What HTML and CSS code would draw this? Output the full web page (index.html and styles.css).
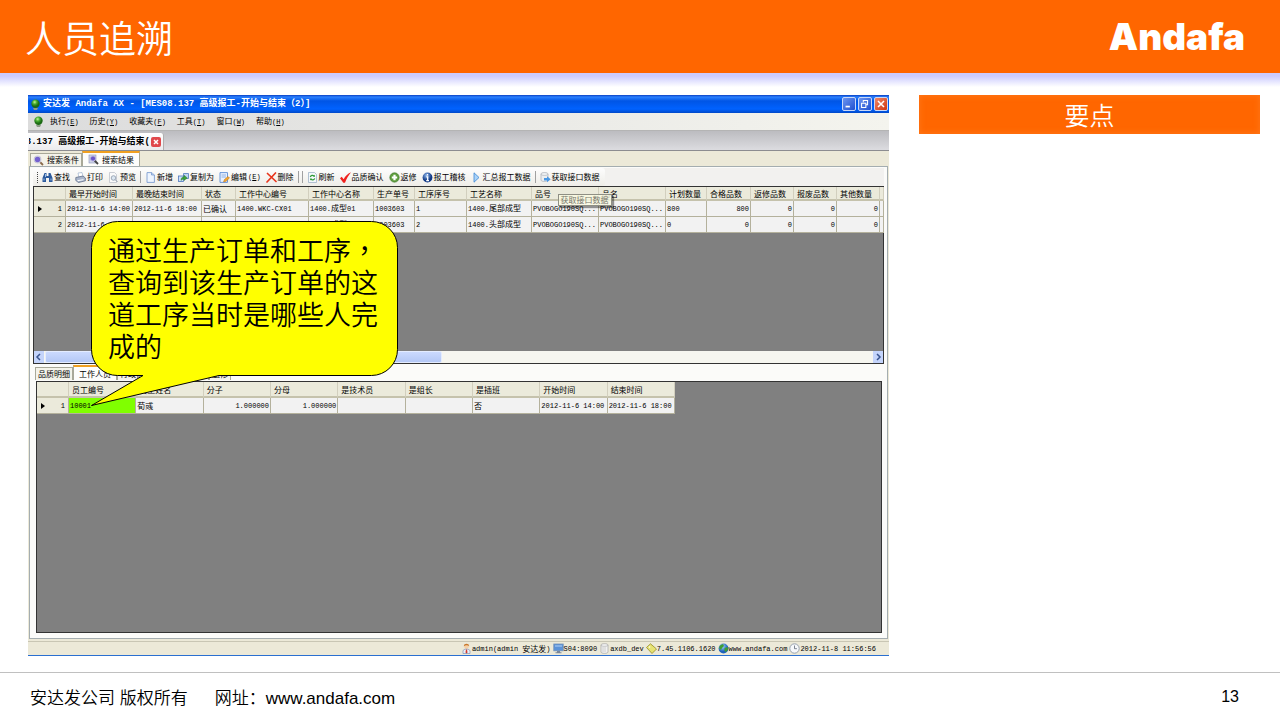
FILE: index.html
```html
<!DOCTYPE html>
<html lang="zh-CN">
<head>
<title>人员追溯</title>
<meta charset="utf-8">
<link rel="stylesheet" href="styles.css">
</head>
<body>

<svg class="sprite" aria-hidden="true">
  <defs>
    <radialGradient id="gGreen" cx="40%" cy="30%"><stop offset="0" stop-color="#c8f59a"/><stop offset=".5" stop-color="#46ac2e"/><stop offset="1" stop-color="#1c6a14"/></radialGradient>
    <radialGradient id="gBlue" cx="40%" cy="30%"><stop offset="0" stop-color="#8fb8ee"/><stop offset="1" stop-color="#123a86"/></radialGradient>
    <radialGradient id="gGlobe" cx="40%" cy="30%"><stop offset="0" stop-color="#a5d4fa"/><stop offset="1" stop-color="#1f62bc"/></radialGradient>
  </defs>
  <symbol id="leaf" viewBox="0 0 11 11"><circle cx="5.5" cy="4.8" r="4.2" fill="url(#gGreen)"/><path d="M3 9h5l-1 2H4z" fill="#8d9a88"/></symbol>
  <symbol id="search" viewBox="0 0 11 11"><path d="M6.5 6.5L10 10" stroke="#8a6a4a" stroke-width="1.8"/><circle cx="4.5" cy="4.5" r="3.3" fill="#7460d0" stroke="#c9c9da" stroke-width="1.2"/></symbol>
  <symbol id="searchdoc" viewBox="0 0 11 11"><rect x="1" y="1" width="7" height="8" fill="#cfd4e8" stroke="#8c93b8" stroke-width=".6"/><path d="M6.5 6.5L10 10" stroke="#444" stroke-width="1.8"/><circle cx="5" cy="4.5" r="2.6" fill="#6a55c8" stroke="#b8b4e0"/></symbol>
  <symbol id="find" viewBox="0 0 11 11"><path d="M2.5 1h2v3h2V1h2l2 5v4H7V6H4v4H.5V6z" fill="#2c5a9c"/><path d="M2 6.5v2M9 6.5v2M3.5 2v3" stroke="#a9c8ef" stroke-width=".9"/></symbol>
  <symbol id="print" viewBox="0 0 11 11"><path d="M3 1l4-.5 1 4-4 1z" fill="#fff" stroke="#8fa6c8" stroke-width=".6"/><path d="M.8 5.5L8 4l2.400 2v2.800L3.500 10.500.8 8.500z" fill="#aab6cc" stroke="#54617c" stroke-width=".7"/><path d="M2.500 8.700l6-1" stroke="#fff"/></symbol>
  <symbol id="preview" viewBox="0 0 11 11"><path d="M1.500.5h5l2 2v8h-7z" fill="#fafafa" stroke="#b8bcc6" stroke-width=".7"/><circle cx="5.500" cy="6" r="2.300" fill="#dce7f2" stroke="#8c98a8" stroke-width=".8"/><path d="M7.200 7.700l2.300 2.300" stroke="#8c98a8"/></symbol>
  <symbol id="new" viewBox="0 0 11 11"><path d="M2 .6h4.600L9.400 3v7.400H2z" fill="#eef5ff" stroke="#6f92cc" stroke-width=".8"/><path d="M6.500.6V3h2.900" fill="#bcd2f2" stroke="#6f92cc" stroke-width=".7"/></symbol>
  <symbol id="copy" viewBox="0 0 11 11"><rect x=".5" y="4" width="5" height="5.500" fill="#cfe0fa" stroke="#4f78bd" stroke-width=".8"/><path d="M5.500 1.500h5v5h-5z" fill="#bfd4f5" stroke="#4f78bd" stroke-width=".8"/><path d="M3 8.500C3 6 4 5 6 5V3.200L9.300 6 6 8.600V7C4.800 7 4 7.500 3 8.500z" fill="#3da23a" stroke="#1d6e22" stroke-width=".4"/></symbol>
  <symbol id="edit" viewBox="0 0 11 11"><path d="M1 .6h7.500v9.800H1z" fill="#e8f1ff" stroke="#5b8cd6" stroke-width=".9"/><path d="M2.500 3h4.500M2.500 5h4.500" stroke="#7ea4dc" stroke-width=".8"/><path d="M4.500 10l1-2.500L9 4.500l1.500 1.500L7 9.300z" fill="#f4a72c" stroke="#b86a10" stroke-width=".5"/></symbol>
  <symbol id="delete" viewBox="0 0 11 11"><path d="M1.500 1.500l8.500 8M9.500 1L1 10" stroke="#e8361c" stroke-width="1.700" stroke-linecap="round"/></symbol>
  <symbol id="refresh" viewBox="0 0 11 11"><path d="M1.500.5h6l2 2v8h-8z" fill="#f4f8fb" stroke="#93a9c2" stroke-width=".7"/><path d="M3.300 5c.4-1.800 2.700-2.200 3.700-.8M7.700 6.300c-.4 1.800-2.700 2.200-3.700.8" fill="none" stroke="#2e9a36" stroke-width="1.200"/><path d="M6 4.800h2V2.700zM5 6.600H3v2z" fill="#2e9a36"/></symbol>
  <symbol id="check" viewBox="0 0 11 11"><path d="M0 6.200l1.700-1.400 2 2.400C5.200 4.300 7.500 1.500 11 .2 8.500 3.300 6.300 7 5 10.800H3.300z" fill="#f0201c"/></symbol>
  <symbol id="plus" viewBox="0 0 11 11"><circle cx="5.500" cy="5.500" r="4.700" fill="#5f9e3e" stroke="#3c7428" stroke-width=".6"/><path d="M5.500 2.800v5.400M2.800 5.500h5.400" stroke="#fff" stroke-width="2.200"/></symbol>
  <symbol id="info" viewBox="0 0 11 11"><circle cx="5.500" cy="5.500" r="4.900" fill="url(#gBlue)"/><path d="M5.500 2v1.500M4.300 4.800h1.400v3.700M4.200 8.700h2.800" stroke="#fff" stroke-width="1.300" fill="none"/></symbol>
  <symbol id="play" viewBox="0 0 11 11"><path d="M3 .8l5 4.700-5 4.700z" fill="#a9d2f8" stroke="#3b86d4" stroke-width=".8"/></symbol>
  <symbol id="fetch" viewBox="0 0 11 11"><path d="M1 2c0-2 7-2 7 0v6c0 2-7 2-7 0z" fill="#eceef0" stroke="#a9aeb5" stroke-width=".7"/><path d="M1 2.200c0 1.700 7 1.700 7 0" fill="none" stroke="#a9aeb5" stroke-width=".6"/><path d="M4 6h3V4.300L10.700 7.300 7 10.300V8.600H4z" fill="#4a98e4"/></symbol>
  <symbol id="user" viewBox="0 0 11 11"><circle cx="5.500" cy="3.500" r="2.300" fill="#f5cfa5"/><path d="M2.800 3.200C3 0 8 0 8.200 3.200 7 2 4.500 2 2.800 3.200z" fill="#c8782c"/><path d="M2 10.500V8c0-2.500 7-2.500 7 0v2.500z" fill="#e8eef8" stroke="#7e93b8" stroke-width=".7"/><path d="M5 6.500h1l.5 3-1 1-1-1z" fill="#d23a2c"/></symbol>
  <symbol id="monitor" viewBox="0 0 11 11"><rect x=".8" y="1" width="9.400" height="6.800" fill="#5c93d8" stroke="#6f8fb8" stroke-width=".8"/><path d="M2 3h7" stroke="#b2d2f5"/><path d="M4 8h3v1.200h1.500v1.100h-6V9.200H4z" fill="#7a8698"/></symbol>
  <symbol id="db" viewBox="0 0 11 11"><path d="M2 2c0-1.800 7-1.800 7 0v7c0 1.800-7 1.800-7 0z" fill="#f1f1f1" stroke="#a4a4a4" stroke-width=".7"/><path d="M4 4v5M6 4v5" stroke="#c7c7c7" stroke-width=".8"/><path d="M2 2.200c0 1.500 7 1.500 7 0" fill="none" stroke="#a4a4a4" stroke-width=".6"/></symbol>
  <symbol id="tag" viewBox="0 0 11 11"><path d="M.5 4.500L4.500.8 10.500 6 6 10.500z" fill="#e6e272" stroke="#948c24" stroke-width=".8"/><circle cx="3.500" cy="4" r=".8" fill="#fff"/></symbol>
  <symbol id="globe" viewBox="0 0 11 11"><circle cx="5.500" cy="5.500" r="4.900" fill="url(#gGlobe)"/><path d="M2 2.500l3-1.500 1 2-2 2-1 2-2-2zM6.500 5l3-1 .5 2.500-2 2.500-1.500-1z" fill="#3f9e34"/></symbol>
  <symbol id="clock" viewBox="0 0 11 11"><circle cx="5.500" cy="5.500" r="4.700" fill="#f6f8fb" stroke="#97a0ae"/><path d="M5.500 2.500v3.200h2.400" fill="none" stroke="#5d6675" stroke-width=".8"/></symbol>
</svg>

<header class="slide-header">
  <h1>人员追溯</h1>
  <span class="brand">Andafa</span>
</header>

<main class="slide-body">
  <section class="window">
    <div class="titlebar">
      <svg class="icon"><use href="#leaf"/></svg>
      <h2>安达发 Andafa AX - [MES08.137 高级报工-开始与结束（2）]</h2>
      <button class="winbtn" aria-label="最小化"><svg viewBox="0 0 14 14"><path d="M3 10h5" stroke="#fff" stroke-width="2"/></svg></button>
      <button class="winbtn" aria-label="还原"><svg viewBox="0 0 14 14"><path d="M5 5V3h5v5H8M3 6h5v5H3z" fill="none" stroke="#fff" stroke-width="1.200"/></svg></button>
      <button class="winbtn close" aria-label="关闭"><svg viewBox="0 0 14 14"><path d="M3.500 3.500l7 7M10.500 3.500l-7 7" stroke="#fff" stroke-width="1.800"/></svg></button>
    </div>

    <nav class="menubar">
      <svg class="icon"><use href="#leaf"/></svg>
      <button>执行<span class="mono">(<u>E</u>)</span></button>
      <button>历史<span class="mono">(<u>Y</u>)</span></button>
      <button>收藏夹<span class="mono">(<u>F</u>)</span></button>
      <button>工具<span class="mono">(<u>T</u>)</span></button>
      <button>窗口<span class="mono">(<u>W</u>)</span></button>
      <button>帮助<span class="mono">(<u>H</u>)</span></button>
    </nav>

    <div class="doctabs">
      <div class="doctab">
        <span class="doctab-name">08.137 高级报工-开始与结束(</span>
        <button class="doctab-close" aria-label="关闭"><svg viewBox="0 0 10 10"><path d="M3 3l4 4M7 3L3 7" stroke="#fff" stroke-width="1.500"/></svg></button>
      </div>
    </div>

    <div class="viewtabs">
      <button class="tab"><svg class="icon"><use href="#search"/></svg>搜索条件</button>
      <button class="tab active"><svg class="icon"><use href="#searchdoc"/></svg>搜索结果</button>
    </div>

    <div class="page">
      <div class="toolbar-row">
        <div class="toolbar">
          <span class="grip"></span>
          <button><svg class="icon"><use href="#find"/></svg>查找</button>
          <button><svg class="icon"><use href="#print"/></svg>打印</button>
          <button><svg class="icon"><use href="#preview"/></svg>预览</button>
          <span class="sep"></span>
          <button><svg class="icon"><use href="#new"/></svg>新增</button>
          <button><svg class="icon"><use href="#copy"/></svg>复制为</button>
          <button><svg class="icon"><use href="#edit"/></svg>编辑<span class="mono">(<u>E</u>)</span></button>
          <button><svg class="icon"><use href="#delete"/></svg>删除</button>
          <span class="sep"></span>
          <span class="sep"></span>
          <button><svg class="icon"><use href="#refresh"/></svg>刷新</button>
          <button><svg class="icon"><use href="#check"/></svg>品质确认</button>
          <button><svg class="icon"><use href="#plus"/></svg>返修</button>
          <button><svg class="icon"><use href="#info"/></svg>报工稽核</button>
          <button><svg class="icon"><use href="#play"/></svg>汇总报工数据</button>
          <span class="sep"></span>
          <button class="has-tip"><svg class="icon"><use href="#fetch"/></svg>获取接口数据<span class="tip">获取接口数据</span></button>
        </div>
      </div>

      <div class="grid-pane top">
        <table class="grid wide">
          <colgroup>
            <col class="w32"><col class="w67"><col class="w69"><col class="w34"><col class="w73"><col class="w65"><col class="w41"><col class="w52"><col class="w65"><col class="w67"><col class="w67"><col class="w41"><col class="w44"><col class="w43"><col class="w43"><col class="w43"><col class="w4">
          </colgroup>
          <thead>
            <tr><th></th><th>最早开始时间</th><th>最晚结束时间</th><th>状态</th><th>工作中心编号</th><th>工作中心名称</th><th>生产单号</th><th>工序序号</th><th>工艺名称</th><th>品号</th><th>品名</th><th>计划数量</th><th>合格品数</th><th>返修品数</th><th>报废品数</th><th>其他数量</th><th></th></tr>
          </thead>
          <tbody>
            <tr>
              <td class="rowhead current">1</td>
              <td>2012-11-6 14:00</td><td>2012-11-6 18:00</td><td class="cjk">已确认</td><td>1400.WKC-CX01</td><td>1400.<b>成型</b>01</td><td>1003603</td><td>1</td><td>1400.<b>尾部成型</b></td><td>PVOBOGO190SQ...</td><td>PVOBOGO190SQ...</td><td>800</td><td class="num">800</td><td class="num">0</td><td class="num">0</td><td class="num">0</td><td></td>
            </tr>
            <tr>
              <td class="rowhead">2</td>
              <td>2012-11-6 14:00</td><td>2012-11-6 18:00</td><td class="cjk">已确认</td><td>1400.WKC-CX01</td><td>1400.<b>成型</b>01</td><td>1003603</td><td>2</td><td>1400.<b>头部成型</b></td><td>PVOBOGO190SQ...</td><td>PVOBOGO190SQ...</td><td>0</td><td class="num">0</td><td class="num">0</td><td class="num">0</td><td class="num">0</td><td></td>
            </tr>
          </tbody>
        </table>
        <div class="scrollbar">
          <button class="scroll-btn" aria-label="向左"><svg viewBox="0 0 8 8"><path d="M5 1L2 4l3 3" fill="none" stroke="#3a558f" stroke-width="1.500"/></svg></button>
          <div class="scroll-track"><div class="scroll-thumb"></div></div>
          <button class="scroll-btn" aria-label="向右"><svg viewBox="0 0 8 8"><path d="M3 1l3 3-3 3" fill="none" stroke="#3a558f" stroke-width="1.500"/></svg></button>
        </div>
      </div>

      <div class="viewtabs detail">
        <button class="tab">品质明细</button>
        <button class="tab active">工作人员</button>
        <button class="tab">行政信息</button>
        <button class="tab">工装模具记录</button>
        <button class="tab">返修</button>
      </div>

      <div class="grid-pane bottom">
        <table class="grid staff">
          <thead>
            <tr><th class="w32"></th><th>员工编号</th><th>员工姓名</th><th>分子</th><th>分母</th><th>是技术员</th><th>是组长</th><th>是插班</th><th>开始时间</th><th>结束时间</th></tr>
          </thead>
          <tbody>
            <tr>
              <td class="rowhead current">1</td><td class="picked">10001</td><td class="cjk">荀彧</td><td class="num">1.000000</td><td class="num">1.000000</td><td></td><td></td><td class="cjk">否</td><td>2012-11-6 14:00</td><td>2012-11-6 18:00</td>
            </tr>
          </tbody>
        </table>
      </div>
    </div>

    <div class="statusbar">
      <span><svg class="icon"><use href="#user"/></svg>admin(admin <b>安达发</b>)</span>
      <span><svg class="icon"><use href="#monitor"/></svg>S04:8090</span>
      <span><svg class="icon"><use href="#db"/></svg>axdb_dev</span>
      <span><svg class="icon"><use href="#tag"/></svg>7.45.1106.1620</span>
      <span><svg class="icon"><use href="#globe"/></svg>www.andafa.com</span>
      <span><svg class="icon"><use href="#clock"/></svg>2012-11-8 11:56:56</span>
    </div>

    <div class="callout">
      <svg viewBox="0 0 308 186" aria-hidden="true"><path d="M26.500.500h254a26 26 0 0 1 26 26v102a26 26 0 0 1-26 26H128L.500 184.500 52 154.500H26.500a26 26 0 0 1-26-26v-102a26 26 0 0 1 26-26z" fill="#ff0" stroke="#000"/></svg>
      <p>通过生产订单和工序<span class="comma" lang="zh-TW">，</span>查询到该生产订单的这道工序当时是哪些人完成的</p>
    </div>
  </section>

  <aside class="keypoints">
    <h2>要点</h2>
  </aside>
</main>

<footer class="slide-footer">
  <span>安达发公司 版权所有</span>
  <span class="site">网址：<a href="http://www.andafa.com">www.andafa.com</a></span>
  <span class="page-no">13</span>
</footer>

</body>
</html>
```

FILE: styles.css
```css
* {
    box-sizing: border-box;
}

body {
    margin: 0;
    min-height: 100vh;
    display: flex;
    flex-direction: column;
    background-color: #fff;
    color: #000;
    font-family: "Liberation Sans", "Noto Sans CJK SC", sans-serif;
}

h1, h2, p {
    margin: 0;
    font-weight: normal;
}

button {
    margin: 0;
    padding: 0;
    border: 0;
    background: none;
    color: inherit;
    font: inherit;
}

.sprite {
    position: absolute;
    width: 0;
    height: 0;
}

.icon {
    flex: none;
    width: 11px;
    height: 11px;
}

.mono {
    font-family: "Liberation Mono", monospace;
    font-size: 7px;
}

/* slide frame */

.slide-header {
    display: flex;
    justify-content: space-between;
    align-items: center;
    height: 73px;
    padding: 0 35px 0 25px;
    background-color: #ff6600;
    color: #fff;
}

.slide-header h1 {
    font-family: "Noto Sans CJK SC", sans-serif;
    font-size: 37px;
    font-weight: 350;
}

.brand {
    font-family: Inter, sans-serif;
    font-size: 37px;
    font-weight: 900;
}

.slide-body {
    flex: 1;
    display: grid;
    grid-template-columns: 861fr 341fr;
    gap: 30px;
    padding: 22px 20px 16px 28px;
    background: linear-gradient(#ccccff 3px, #fff 14px);
}

.keypoints h2 {
    background-color: #ff6600;
    box-shadow: inset 0 0 6px #ff7a1c;
    color: #fff;
    font-family: "Noto Sans CJK SC", sans-serif;
    font-size: 25px;
    font-weight: 350;
    line-height: 38px;
    padding-bottom: 1px;
    text-align: center;
}

.slide-footer {
    display: flex;
    align-items: center;
    height: 48px;
    padding: 0 41px 0 30px;
    border-top: 1px solid #c0c0c0;
    font-size: 17px;
    font-weight: 350;
}

.slide-footer .site {
    margin-left: 27px;
}

.slide-footer a {
    color: #000;
    text-decoration: none;
}

.slide-footer .page-no {
    margin-left: auto;
    font-size: 16px;
}

/* application window */

.window {
    position: relative;
    display: flex;
    flex-direction: column;
    min-width: 0;
    background-color: #ece9d8;
    border-bottom: 1px solid #2a6fd0;
    font-family: "Noto Sans CJK SC", sans-serif;
    font-size: 8px;
    line-height: 12px;
    white-space: nowrap;
}

.titlebar {
    display: flex;
    align-items: center;
    gap: 2px;
    height: 18px;
    padding: 0 1px 0 2px;
    background: linear-gradient(#0a3fc0, #2a80ff 2px, #0055e5 6px, #0062ff 14px, #0048c8);
    color: #fff;
}

.titlebar h2 {
    flex: 1;
    font-family: "Liberation Mono", "Noto Sans CJK SC", monospace;
    font-size: 9px;
    font-weight: bold;
}

.winbtn {
    width: 14px;
    height: 14px;
    border: 1px solid #c9d8f8;
    border-radius: 2px;
    background: linear-gradient(135deg, #6d95f0, #1f4fd0);
}

.winbtn.close {
    background: linear-gradient(135deg, #f08868, #d03410);
}

.winbtn svg {
    display: block;
}

.menubar {
    display: flex;
    align-items: center;
    gap: 11px;
    height: 17px;
    padding-left: 5px;
    background: linear-gradient(90deg, #dcdcdc, #f4f4ee);
}

.menubar .icon {
    margin-right: -5px;
}

.doctabs {
    display: flex;
    align-items: flex-end;
    height: 21px;
    border-top: 1px solid #b4b4b4;
    border-bottom: 1px solid #8c8c90;
    background: linear-gradient(#bcbcc0, #dcdce0);
}

.doctab {
    display: flex;
    align-items: center;
    gap: 1px;
    width: 136px;
    height: 17px;
    padding: 0 2px 0 1px;
    border-right: 1px solid #b0b0b0;
    border-radius: 0 3px 0 0;
    background: linear-gradient(#fff, #ebebee);
}

/* the name is wider than the tab, its start is cut off */
.doctab-name {
    flex: 1;
    display: flex;
    justify-content: flex-end;
    overflow: hidden;
    font-family: "Liberation Mono", "Noto Sans CJK SC", monospace;
    font-size: 9px;
    font-weight: bold;
}

.doctab-close {
    width: 10px;
    height: 10px;
    border-radius: 2px;
    background-color: #e0484c;
}

.doctab-close svg {
    display: block;
}

.viewtabs {
    display: flex;
    align-items: flex-end;
    height: 15px;
    padding-left: 2px;
}

.tab {
    display: flex;
    align-items: center;
    gap: 3px;
    height: 13px;
    padding: 0 2px;
    border: 1px solid #a8a898;
    border-bottom: 0;
    background-color: #f4f3ea;
}

.tab.active {
    height: 15px;
    padding: 0 5px;
    border-top: 2px solid #f0a020;
    background-color: #fdfdfb;
}

.page {
    flex: 1;
    display: flex;
    flex-direction: column;
    margin: 0 1px 2px;
    padding: 1px 3px 5px;
    border: 1px solid #a4adb0;
    background-color: #fbfbf9;
}

.toolbar-row {
    height: 18px;
    background-color: #f2f1ef;
}

.toolbar {
    display: flex;
    align-items: center;
    gap: 5px;
    width: max-content;
    height: 18px;
    padding: 0 5px 0 4px;
    border-radius: 0 3px 3px 0;
    background: linear-gradient(#fdfdfd, #eeede8);
}

.toolbar button {
    display: flex;
    align-items: center;
    gap: 1px;
}

.grip {
    height: 11px;
    margin-right: -1px;
    border-left: 1px dotted #444;
}

.sep {
    height: 12px;
    margin: 0 -1px;
    border-left: 1px solid #a0a0a0;
}

.has-tip {
    position: relative;
}

.tip {
    position: absolute;
    z-index: 1;
    top: 23px;
    left: 18px;
    padding: 0 2px;
    border: 1px solid #8f8f84;
    background-color: rgba(250, 250, 225, 0.8);
    box-shadow: 2px 2px 1px rgba(0, 0, 0, 0.4);
    color: #77776c;
    line-height: 10px;
}

.grid-pane {
    background-color: #808080;
    border: 1px solid #333;
}

.grid-pane.top {
    display: flex;
    flex-direction: column;
    height: 178px;
}

.grid-pane.bottom {
    flex: 1;
    margin: 0 2px 0 3px;
}

/* data grids */

.grid {
    table-layout: fixed;
    border-collapse: separate;
    border-spacing: 0;
}

.grid.wide {
    width: 100%;
}

.grid.staff {
    width: 638px;
    max-width: 100%;
}

.grid th,
.grid td {
    overflow: hidden;
    padding: 0 1px;
    font-weight: normal;
    text-align: left;
}

.grid th {
    height: 14px;
    padding-left: 3px;
    border-right: 1px solid #d2cfbe;
    border-bottom: 2px solid #c5c2ac;
    background-color: #ebeadb;
    line-height: 11px;
}

.grid td {
    height: 16px;
    border-right: 1px solid #b4b19c;
    border-bottom: 1px solid #b4b19c;
    background-color: #f2f2f2;
    font-family: "Liberation Mono", "Noto Sans CJK SC", monospace;
    font-size: 7px;
}

.grid.staff th {
    height: 16px;
}

.grid td b,
.grid td.cjk,
.statusbar b {
    font-family: "Noto Sans CJK SC", sans-serif;
    font-size: 8px;
    font-weight: normal;
}

.grid td.num {
    text-align: right;
}

.grid td.rowhead {
    padding-right: 3px;
    background-color: #ebeadb;
    text-align: right;
}

.rowhead.current::before {
    content: "";
    float: left;
    margin: 3px 0 0 3px;
    border: 3px solid transparent;
    border-left: 4px solid #000;
    border-right: 0;
}

.grid td.picked {
    background-color: #80ff00;
}

.w4 { width: 4px; }
.w32 { width: 32px; }
.w34 { width: 34px; }
.w41 { width: 41px; }
.w43 { width: 43px; }
.w44 { width: 44px; }
.w52 { width: 52px; }
.w65 { width: 65px; }
.w67 { width: 67px; }
.w69 { width: 69px; }
.w73 { width: 73px; }

.scrollbar {
    display: flex;
    gap: 1px;
    height: 12px;
    margin-top: auto;
    background-color: #f6f6f0;
}

.scroll-btn {
    width: 10px;
    background-color: #c4d4fb;
}

.scroll-btn svg {
    display: block;
    width: 8px;
    margin: 0 auto;
}

.scroll-track {
    flex: 1;
}

.scroll-thumb {
    width: 48%;
    height: 12px;
    border: 1px solid #e4ecff;
    border-radius: 2px;
    background: linear-gradient(#cbdafe, #b4c8f6);
}

.viewtabs.detail {
    height: 17px;
    padding-bottom: 1px;
}

.statusbar {
    display: flex;
    justify-content: flex-end;
    align-items: center;
    gap: 2px;
    height: 14px;
    padding-right: 13px;
    border-top: 1px solid #c9c6b4;
    font-family: "Liberation Mono", monospace;
    font-size: 7px;
}

.statusbar span {
    display: flex;
    align-items: center;
    white-space: pre;
}

/* speech balloon over the grids */

.callout {
    position: absolute;
    top: 126px;
    left: 63px;
    width: 308px;
}

.callout svg {
    display: block;
}

.callout p {
    position: absolute;
    top: 13px;
    left: 17px;
    width: 275px;
    font-size: 27px;
    font-weight: 350;
    line-height: 32px;
    white-space: normal;
}

.comma {
    font-family: "Noto Sans CJK TC", sans-serif;
}
```
